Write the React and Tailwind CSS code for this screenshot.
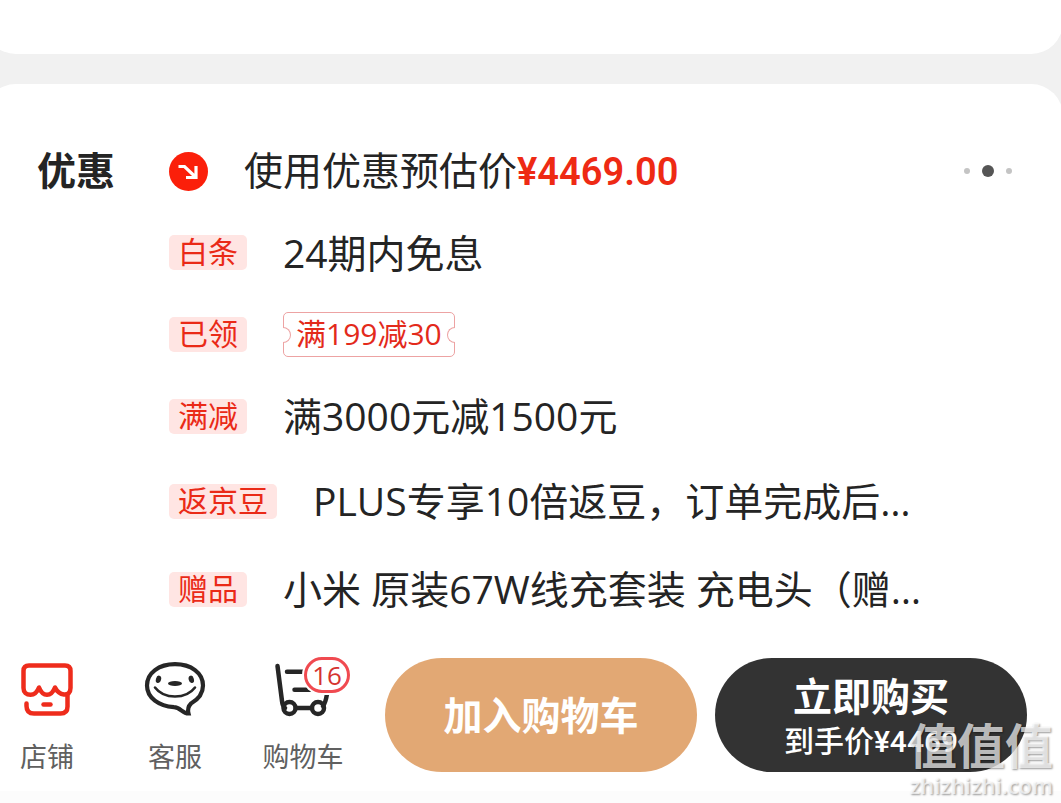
import React from 'react';

const offers = [
	{ tag: '白条', text: '24期内免息', row: 'h-[81px]' },
	{ tag: '已领', coupon: '满199减30', row: 'h-[82px]' },
	{ tag: '满减', text: '满3000元减1500元', row: 'h-[82px]' },
	{ tag: '返京豆', text: 'PLUS专享10倍返豆，订单完成后…', row: 'h-[88px]' },
	{ tag: '赠品', text: '小米 原装67W线充套装 充电头（赠…', row: 'h-[88px]' },
];

const ShopIcon = () => (
	<svg width="54" height="58" viewBox="0 0 54 58" fill="none" stroke="#ee2c1c" strokeWidth="4.500" strokeLinecap="round" strokeLinejoin="round">
		<path d="M9 5.500H45Q50.500 5.500 50.500 11V28C50.500 32.500 48 35 44 34.500C40 34 37 31.500 35 27.500C33 32.500 30.500 34.800 27 34.800S21 32.500 19 27.500C17 32.500 14 34.800 10.500 34.800C6.500 34.800 3.500 32.500 3.500 28V11Q3.500 5.500 9 5.500Z" />
		<path d="M6.500 43.500V46Q6.500 53.500 14 53.500H40.500Q47.500 53.500 47.500 46.500V34" />
		<path d="M23.500 44.500H30.500" />
	</svg>
);

const ServiceIcon = () => (
	<svg width="62" height="58" viewBox="0 0 62 58" fill="none" stroke="#262626" strokeWidth="4.200" strokeLinecap="round">
		<path d="M31 4.200C15 4.200 3 13 3 25.500S15 46 30 47.200C36.500 47.200 38 53.500 44.500 53.500C43.500 49.500 44 46.500 47 43.500C54 39.500 59 34 59 25.500C59 13 47 4.200 31 4.200Z" strokeLinejoin="miter" />
		<path d="M11 27.500C20 39.500 42 39.500 51 27.500" strokeWidth="2.600" />
		<g fill="#262626" stroke="none">
			<ellipse cx="14.500" cy="19.300" rx="2.600" ry="3.800" transform="rotate(15 14.500 19.300)" />
			<ellipse cx="47.300" cy="19.300" rx="2.600" ry="3.800" transform="rotate(-15 47.300 19.300)" />
			<ellipse cx="31" cy="23.500" rx="7" ry="2.500" />
		</g>
	</svg>
);

const CartIcon = () => (
	<svg width="60" height="58" viewBox="0 0 60 58" fill="none" stroke="#262626" strokeWidth="4.500" strokeLinecap="round">
		<path d="M4.500 6L9 41Q9.500 46 12 48" />
		<circle cx="16.500" cy="48" r="6" />
		<circle cx="45" cy="48" r="6" />
		<path d="M23 48H38.500M50 46Q52.500 43 54 34" />
		<path d="M14 11.700H36M21.500 29.700H38" />
	</svg>
);

const ArrowBadge = () => (
	<svg className="shrink-0" width="39" height="39" viewBox="0 0 39 39">
		<circle cx="19.500" cy="19.500" r="19.500" fill="#fb1f0a" />
		<path d="M9.500 14.500H15.500L26.500 25M17 25.500H27V14" fill="none" stroke="#fff" strokeWidth="3.200" />
	</svg>
);

const Tag = ({ children }) => (
	<span className="h-[35px] shrink-0 rounded-[5px] bg-[#ffe5e3] px-[9px] text-[30px] leading-[34px] text-[#ea2a17]">
		{children}
	</span>
);

const Coupon = ({ children }) => (
	<span className="relative flex h-[45px] items-center rounded-[5px] border border-[#eda3a3] px-3 text-[30px] leading-[44px] text-[#e32a1b]">
		<i className="absolute top-[14px] -left-px h-4 w-2 rounded-r-full border border-l-0 border-[#eda3a3] bg-white" />
		{children}
		<i className="absolute top-[14px] -right-px h-4 w-2 rounded-l-full border border-r-0 border-[#eda3a3] bg-white" />
	</span>
);

const NavButton = ({ icon, label, count }) => (
	<button className="relative flex w-20 shrink-0 flex-col items-center text-[27px] leading-8 text-[#606060]">
		{icon}
		<span className="mt-[23px] whitespace-nowrap">{label}</span>
		{count && (
			<span className="absolute -top-[3px] left-[41px] flex h-9 w-[46px] items-center justify-center rounded-full border-3 border-[#f04a50] bg-white text-[26px] text-[#d5332f] ring-2 ring-white">
				{count}
			</span>
		)}
	</button>
);

const App = () => {
	return (
		<div className="relative min-h-screen overflow-hidden bg-[#fcfcfc] font-['Open_Sans','Noto_Sans_CJK_SC',sans-serif] text-[#242424]">
			<div className="bg-[#f1f1f1]">
				<div className="-mr-0.5 -ml-4 h-[54px] rounded-b-[32px] bg-white" />
				<section className="mt-[30px] -mr-0.5 -ml-4 rounded-t-[32px] bg-white pt-[46px] pr-[51px] pb-px pl-[53px]">
					<div className="flex">
						<h2 className="w-[132px] shrink-0 text-[39px] leading-[80px] font-bold">优惠</h2>
						<div className="min-w-0 flex-1">
							<div className="flex h-[82px] items-center">
								<ArrowBadge />
								<p className="ml-9 flex-1 text-[39px] leading-[82px] whitespace-nowrap">
									使用优惠预估价
									<strong className="font-['Roboto'] text-[38px] font-semibold text-[#ee2a14]">¥4469.00</strong>
								</p>
								<button aria-label="更多" className="flex items-center gap-3">
									<span className="size-1.5 rounded-full bg-[#c4c4c4]" />
									<span className="size-3 rounded-full bg-[#555]" />
									<span className="size-1.5 rounded-full bg-[#c4c4c4]" />
								</button>
							</div>
							<ul>
								{offers.map((offer) => (
									<li key={offer.tag} className={`flex items-center ${offer.row}`}>
										<Tag>{offer.tag}</Tag>
										<div className="ml-9 min-w-0 text-[39px] leading-[56px] whitespace-nowrap">
											{offer.coupon ? <Coupon>{offer.coupon}</Coupon> : offer.text}
										</div>
									</li>
								))}
							</ul>
						</div>
					</div>
				</section>
			</div>

			<footer className="flex bg-white pt-[24px] pr-[34px] pb-[18px] pl-[7px]">
				<nav className="mt-0.5 flex gap-12">
					<NavButton icon={<ShopIcon />} label="店铺" />
					<NavButton icon={<ServiceIcon />} label="客服" />
					<NavButton icon={<CartIcon />} label="购物车" count="16" />
				</nav>
				<div className="ml-[42px] flex flex-1 gap-[18px] text-white">
					<button className="h-[114px] flex-1 rounded-full bg-[#e2a874] text-[39px] font-bold">加入购物车</button>
					<button className="flex h-[114px] flex-1 flex-col items-center justify-center rounded-full bg-[#333] pt-1.5">
						<span className="text-[39px] leading-[48px] font-bold">立即购买</span>
						<span className="font-['Roboto','Noto_Sans_CJK_SC',sans-serif] text-[30px] leading-[44px] font-medium">到手价¥4469</span>
					</button>
				</div>
			</footer>

			<div className="pointer-events-none absolute right-2 bottom-1 flex flex-col items-end text-white/70 text-shadow-[1px_1px_2px_rgb(0_0_0/0.4)]">
				<span className="text-[48px] leading-[50px] font-bold">值值值</span>
				<span className="text-[22px] leading-7 font-semibold">zhizhizhi.com</span>
			</div>
		</div>
	);
};

export default App;
